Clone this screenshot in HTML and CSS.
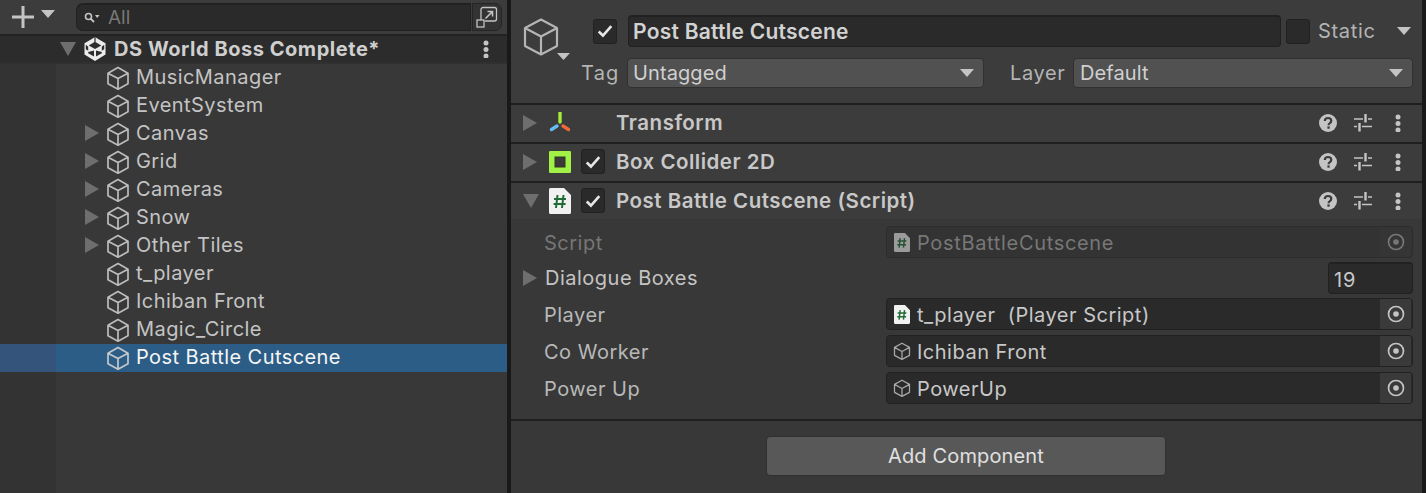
FILE: index.html
```html
<!DOCTYPE html>
<html lang="en">
<head>
<meta charset="utf-8">
<title>Unity Editor</title>
<link rel="stylesheet" href="styles.css">
</head>
<body>
<svg class="defs" width="0" height="0" aria-hidden="true">
  <symbol id="cube" viewBox="0 0 24 24">
    <path d="M12 1.6 22 7.2V17.8L12 23.2 2 17.8V7.2ZM2 7.2 12 12.6 22 7.2M12 12.6V23.2" fill="none" stroke="currentColor" stroke-width="1.7" stroke-linejoin="round"/>
  </symbol>
  <symbol id="script" viewBox="0 0 22 26">
    <path d="M1.5 0H15L22 7V24.5A1.5 1.5 0 0 1 20.500 26H1.500A1.500 1.500 0 0 1 0 24.500V1.500A1.500 1.500 0 0 1 1.500 0Z" fill="#f1f1f1"/>
    <path d="M8.500 7 7 20M14.500 7 13 20M5 11h12M4.600 16h12" fill="none" stroke="#1f6b35" stroke-width="2"/>
  </symbol>
  <symbol id="target" viewBox="0 0 18 18">
    <circle cx="9" cy="9" r="7.500" fill="none" stroke="currentColor" stroke-width="1.700"/>
    <circle cx="9" cy="9" r="2.800" fill="currentColor"/>
  </symbol>
  <symbol id="help" viewBox="0 0 18 18">
    <circle cx="9" cy="9" r="9" fill="#c4c4c4"/>
    <path d="M5.800 7C5.900 5 7.300 4 9 4c1.900 0 3.300 1.100 3.300 2.800 0 1.400-.8 2-1.700 2.600-.8.500-1 .9-1 1.800" fill="none" stroke="#3c3c3c" stroke-width="2.200"/>
    <rect x="8.400" y="12.400" width="2.300" height="2.300" fill="#3c3c3c"/>
  </symbol>
  <symbol id="sliders" viewBox="0 0 18 18">
    <path d="M0 5H9M14 5H18M0 12.500H3M8 12.500H18" stroke="#c4c4c4" stroke-width="1.500" fill="none"/>
    <path d="M11.500 0V8.500M5.500 9V17.500" stroke="#c4c4c4" stroke-width="2.400" fill="none"/>
  </symbol>
  <symbol id="dots" viewBox="0 0 6 18">
    <circle cx="3" cy="3" r="2.500" fill="#c4c4c4"/>
    <circle cx="3" cy="9.500" r="2.500" fill="#c4c4c4"/>
    <circle cx="3" cy="16" r="2.500" fill="#c4c4c4"/>
  </symbol>
  <symbol id="check" viewBox="0 0 14 12">
    <path d="M1.500 6.500 5.200 10 12.500 1.800" fill="none" stroke="#e6e6e6" stroke-width="2.300"/>
  </symbol>
</svg>

<div class="app">
  <section class="hierarchy">
    <div class="toolbar">
      <svg class="plus" viewBox="0 0 22 22"><path d="M11 0V22M0 11H22" stroke="#c4c4c4" stroke-width="3"/></svg>
      <span class="caret caret-toolbar"></span>
      <div class="search">
        <svg class="search-icon" viewBox="0 0 16 12"><circle cx="4.500" cy="4.500" r="3" fill="none" stroke="#c4c4c4" stroke-width="1.600"/><path d="M6.500 6.500 10 10" stroke="#c4c4c4" stroke-width="1.800"/><path d="M11 3h4.500L13.200 6Z" fill="#c4c4c4"/></svg>
        <span class="search-text">All</span>
      </div>
      <div class="scene-btn">
        <svg class="scene-icon" viewBox="0 0 22 22" fill="none" stroke="#c4c4c4" stroke-width="1.300"><path d="M5 14V3.500A2 2 0 0 1 7 1.500H18.500A2 2 0 0 1 20.500 3.500V13A2 2 0 0 1 18.500 15H9"/><rect x="1" y="14" width="7" height="7"/><path d="M9.500 12.500 16 6M11.500 5.500H16.500V10.500" stroke-width="1.600"/></svg>
      </div>
    </div>
    <div class="scene-row">
      <span class="tri-down tri-scene"></span>
      <svg class="unity" viewBox="0 0 22 24">
        <path d="M11 0 15 2.600 21.500 6.200V17.500L11 24 .5 17.500V6.200L7 2.600Z" fill="#ececec"/>
        <path d="M11 4.800 17.300 8.400 11 12 4.700 8.400Z" fill="#2d2d2d"/>
        <path d="M4.200 9.800V13.700L1.800 12.300V7.800ZM17.800 9.800V13.700L20.200 12.300V7.800ZM10 13.500V19.500L4.200 16.200V15ZM12 13.500V19.500L17.800 16.200V15Z" fill="#2d2d2d"/>
        <path d="M11 0V5" stroke="#2d2d2d" stroke-width="1.200"/>
      </svg>
      <span class="scene-name">DS World Boss Complete*</span>
      <svg class="dots scene-dots"><use href="#dots"/></svg>
    </div>
    <div class="tree">
      <div class="gutter"></div>
      <ul class="rows">
        <li class="row"><span class="no-tri"></span><svg class="cube"><use href="#cube"/></svg><span class="row-text">MusicManager</span></li>
        <li class="row"><span class="no-tri"></span><svg class="cube"><use href="#cube"/></svg><span class="row-text">EventSystem</span></li>
        <li class="row"><span class="tri-right"></span><svg class="cube"><use href="#cube"/></svg><span class="row-text">Canvas</span></li>
        <li class="row"><span class="tri-right"></span><svg class="cube"><use href="#cube"/></svg><span class="row-text">Grid</span></li>
        <li class="row"><span class="tri-right"></span><svg class="cube"><use href="#cube"/></svg><span class="row-text">Cameras</span></li>
        <li class="row"><span class="tri-right"></span><svg class="cube"><use href="#cube"/></svg><span class="row-text">Snow</span></li>
        <li class="row"><span class="tri-right"></span><svg class="cube"><use href="#cube"/></svg><span class="row-text">Other Tiles</span></li>
        <li class="row"><span class="no-tri"></span><svg class="cube"><use href="#cube"/></svg><span class="row-text">t_player</span></li>
        <li class="row"><span class="no-tri"></span><svg class="cube"><use href="#cube"/></svg><span class="row-text">Ichiban Front</span></li>
        <li class="row"><span class="no-tri"></span><svg class="cube"><use href="#cube"/></svg><span class="row-text">Magic_Circle</span></li>
        <li class="row selected"><span class="no-tri"></span><svg class="cube"><use href="#cube"/></svg><span class="row-text">Post Battle Cutscene</span></li>
      </ul>
    </div>
  </section>

  <section class="inspector">
    <header class="go-header">
      <svg class="go-icon" viewBox="0 0 48 45">
        <path d="M18 1.500 34 10V28L18 36.500 2 28V10ZM2 10 18 18.500 34 10M18 18.500V36.500" fill="none" stroke="#b4b4b4" stroke-width="2.200" stroke-linejoin="round"/>
        <path d="M34 35H47L40.500 42Z" fill="#c4c4c4"/>
      </svg>
      <div class="go-fields">
        <div class="go-row go-row-top">
          <span class="checkbox checked"><svg class="tick"><use href="#check"/></svg></span>
          <div class="name-field">Post Battle Cutscene</div>
          <span class="checkbox static-box"></span>
          <span class="static-label">Static</span>
          <span class="caret caret-static"></span>
        </div>
        <div class="go-row go-row-bottom">
          <span class="go-label tag-label">Tag</span>
          <div class="dropdown tag-drop">Untagged<span class="caret"></span></div>
          <span class="go-label layer-label">Layer</span>
          <div class="dropdown layer-drop">Default<span class="caret"></span></div>
        </div>
      </div>
    </header>

    <div class="comp-head">
      <span class="tri-right comp-tri"></span>
      <svg class="comp-icon" viewBox="0 0 22 22">
        <path d="M11 1V10" stroke="#a6ec3c" stroke-width="3.400" stroke-linecap="round"/>
        <path d="M8 14 2.500 17.500" stroke="#63bdf3" stroke-width="3.400" stroke-linecap="round"/>
        <path d="M14 14 19.500 17.500" stroke="#f0683a" stroke-width="3.400" stroke-linecap="round"/>
      </svg>
      <span class="comp-spacer"></span>
      <span class="comp-title">Transform</span>
      <div class="comp-tools"><svg class="help"><use href="#help"/></svg><svg class="sliders"><use href="#sliders"/></svg><svg class="dots"><use href="#dots"/></svg></div>
    </div>
    <div class="comp-head">
      <span class="tri-right comp-tri"></span>
      <svg class="comp-icon" viewBox="0 0 22 22"><rect width="22" height="22" rx="1" fill="#a0f045"/><rect x="6" y="6" width="10" height="10" fill="#3a3a3a" stroke="#2c3b1c"/></svg>
      <span class="checkbox checked comp-check"><svg class="tick"><use href="#check"/></svg></span>
      <span class="comp-title">Box Collider 2D</span>
      <div class="comp-tools"><svg class="help"><use href="#help"/></svg><svg class="sliders"><use href="#sliders"/></svg><svg class="dots"><use href="#dots"/></svg></div>
    </div>
    <div class="comp-head comp-open">
      <span class="tri-down comp-tri"></span>
      <svg class="comp-icon doc"><use href="#script"/></svg>
      <span class="checkbox checked comp-check"><svg class="tick"><use href="#check"/></svg></span>
      <span class="comp-title">Post Battle Cutscene (Script)</span>
      <div class="comp-tools"><svg class="help"><use href="#help"/></svg><svg class="sliders"><use href="#sliders"/></svg><svg class="dots"><use href="#dots"/></svg></div>
    </div>

    <div class="props">
      <div class="prop disabled">
        <span class="prop-label">Script</span>
        <div class="obj-field"><svg class="mini-doc"><use href="#script"/></svg><span class="obj-text">PostBattleCutscene</span><span class="picker"><svg class="target"><use href="#target"/></svg></span></div>
      </div>
      <div class="prop prop-array">
        <span class="tri-right array-tri"></span>
        <span class="prop-label array-label">Dialogue Boxes</span>
        <div class="num-field">19</div>
      </div>
      <div class="prop">
        <span class="prop-label">Player</span>
        <div class="obj-field"><svg class="mini-doc"><use href="#script"/></svg><span class="obj-text">t_player&nbsp; (Player Script)</span><span class="picker"><svg class="target"><use href="#target"/></svg></span></div>
      </div>
      <div class="prop">
        <span class="prop-label">Co Worker</span>
        <div class="obj-field"><svg class="mini-cube"><use href="#cube"/></svg><span class="obj-text">Ichiban Front</span><span class="picker"><svg class="target"><use href="#target"/></svg></span></div>
      </div>
      <div class="prop">
        <span class="prop-label">Power Up</span>
        <div class="obj-field"><svg class="mini-cube"><use href="#cube"/></svg><span class="obj-text">PowerUp</span><span class="picker"><svg class="target"><use href="#target"/></svg></span></div>
      </div>
    </div>

    <div class="footer">
      <div class="add-btn">Add Component</div>
    </div>
  </section>
</div>
</body>
</html>
```

FILE: styles.css
```css
* { box-sizing: border-box; }
html, body { margin: 0; padding: 0; height: 100%; overflow: hidden; }
body { background: #191919; color: #c8c8c8; font-family: Inter, "Liberation Sans", sans-serif; font-size: 20px; }
.defs { display: block; height: 0; }
.app { display: flex; height: 493px; width: 1426px; }

/* Shared glyphs */
.caret { display: inline-block; width: 0; height: 0; border-left: 7px solid transparent; border-right: 7px solid transparent; border-top: 8px solid #c4c4c4; }
.tri-right { display: block; width: 0; height: 0; border-top: 8px solid transparent; border-bottom: 8px solid transparent; border-left: 14px solid #6e6e6e; }
.tri-down { display: block; width: 0; height: 0; border-left: 8px solid transparent; border-right: 8px solid transparent; border-top: 14px solid #6e6e6e; }
.checkbox { flex: none; display: flex; align-items: center; justify-content: center; width: 24px; height: 25px; background: #2a2a2a; border: 1px solid #212121; border-radius: 3px; }
.tick { width: 16px; height: 14px; }
.dots { width: 6px; height: 18px; }

/* Hierarchy */
.hierarchy { flex: none; width: 507px; background: #383838; display: flex; flex-direction: column; }
.toolbar { flex: none; height: 36px; display: flex; align-items: center; background: #3c3c3c; border-bottom: 2px solid #232323; padding: 0 7px 0 12px; }
.plus { width: 22px; height: 22px; flex: none; }
.caret-toolbar { margin-left: 7px; margin-top: -6px; }
.search { flex: none; width: 395px; height: 28px; margin-left: 21px; background: #2a2a2a; border: 1px solid #212121; border-top-width: 2px; border-radius: 7px 0 0 7px; display: flex; align-items: center; padding-left: 7px; }
.search-icon { width: 16px; height: 12px; margin-right: 8px; }
.search-text { color: #777; font-size: 19px; }
.scene-btn { flex: none; width: 30px; height: 28px; margin-left: 1px; background: #333; border: 1px solid #252525; border-radius: 0 7px 7px 0; display: flex; align-items: center; justify-content: center; }
.scene-icon { width: 22px; height: 22px; }
.scene-row { flex: none; height: 28px; display: flex; align-items: center; background: #2c2c2c; border-bottom: 2px solid #303030; padding-left: 60px; padding-right: 18px; }
.unity { width: 22px; height: 24px; margin-left: 8px; flex: none; }
.scene-name { margin-left: 8px; font-weight: 700; color: #cfcfcf; flex: 1; letter-spacing: .54px; }
.tree { flex: 1; display: flex; min-height: 0; position: relative; }
.gutter { position: absolute; left: 0; top: 0; bottom: 0; width: 56px; background: #333; }
.rows { list-style: none; margin: 0; padding: 0; width: 100%; position: relative; }
.row { height: 28px; display: flex; align-items: center; padding-left: 85px; color: #c4c4c4; line-height: 26px; }
.row .tri-right { flex: none; margin-top: -2px; }
.row-text { padding-bottom: 2px; letter-spacing: .43px; }
.no-tri { width: 14px; flex: none; }
.cube { width: 24px; height: 24px; flex: none; margin: 0 7px 0 7px; color: #bcbcbc; }
.row .row-text { margin-left: -1px; }
.selected { background: linear-gradient(90deg, #35547c 56px, #2c5d87 56px); color: #f5f5f5; }
.selected .cube { color: #c4c8cc; }

/* Inspector */
.inspector { flex: none; width: 911px; margin-left: 4px; background: #383838; display: flex; flex-direction: column; }
.go-header { flex: none; height: 105px; background: #3c3c3c; border-bottom: 2px solid #1f1f1f; display: flex; padding: 15px 9px 0 12px; }
.go-icon { flex: none; width: 48px; height: 45px; margin-top: 3px; margin-right: 11px; }
.go-fields { flex: 1; display: flex; flex-direction: column; min-width: 0; }
.go-row { display: flex; align-items: center; }
.go-row-top { height: 32px; padding-left: 11px; }
.name-field { flex: none; width: 653px; height: 32px; margin-left: 11px; padding-left: 4px; background: #2a2a2a; border: 1px solid #212121; border-top-width: 2px; border-radius: 4px; font-size: 21px; font-weight: 600; color: #d2d2d2; display: flex; align-items: center; letter-spacing: .25px; }
.static-box { margin-left: 5px; }
.static-label { margin-left: 8px; color: #b4b4b4; letter-spacing: .7px; }
.caret-static { margin-left: 21px; }
.go-row-bottom { height: 30px; margin-top: 11px; }
.go-label { color: #b4b4b4; width: 46px; flex: none; letter-spacing: .6px; }
.tag-label { margin-left: -1px; letter-spacing: 1.2px; }
.dropdown { flex: none; height: 30px; display: flex; align-items: center; justify-content: space-between; background: #515151; border: 1px solid #303030; border-radius: 4px; padding: 0 9px 0 6px; color: #d0d0d0; letter-spacing: .1px; }
.tag-drop { width: 357px; padding-left: 5px; }
.layer-label { margin-left: 26px; width: 63px; }
.layer-drop { width: 340px; }

.comp-head { flex: none; height: 39px; display: flex; align-items: center; background: #3c3c3c; border-bottom: 2px solid #1f1f1f; padding: 0 21px 2px 12px; }
.comp-open { height: 36px; border-bottom: 0; padding-bottom: 1px; }
.comp-tri { flex: none; }
.comp-icon { flex: none; width: 22px; height: 22px; margin-left: 12px; }
.tri-down.comp-tri + .comp-icon { margin-left: 10px; }
.comp-icon.doc { height: 26px; }
.comp-spacer { width: 24px; flex: none; margin-left: 10px; }
.comp-check { margin-left: 10px; }
.comp-title { margin-left: 11px; font-size: 20.5px; font-weight: 600; color: #c8c8c8; flex: 1; letter-spacing: .5px; }
.comp-tools { display: flex; align-items: center; flex: none; }
.help { width: 18px; height: 18px; }
.sliders { width: 18px; height: 18px; margin-left: 17px; }
.comp-tools .dots { margin-left: 23px; }

.props { flex: none; height: 202px; padding: 7px 9px 0 33px; border-bottom: 2px solid #1f1f1f; display: flex; flex-direction: column; gap: 5px; }
.prop { display: flex; align-items: center; height: 32px; justify-content: space-between; flex: none; }
.prop-array { height: 30px; }
.prop-label { color: #b8b8b8; letter-spacing: .5px; padding-top: 2px; }
.array-tri { margin-left: -21px; flex: none; }
.array-label { margin-left: 8px; flex: 1; color: #c4c4c4; padding-top: 0; }
.obj-field { flex: none; width: 527px; height: 32px; display: flex; align-items: center; background: #2a2a2a; border: 1px solid #212121; border-radius: 4px; padding-left: 7px; color: #c8c8c8; overflow: hidden; }
.mini-doc { width: 16px; height: 19px; flex: none; }
.mini-cube { width: 18px; height: 18px; flex: none; margin-left: -1px; margin-right: -1px; color: #a8a8a8; }
.obj-text { margin-left: 7px; flex: 1; letter-spacing: .5px; white-space: nowrap; padding-top: 2px; }
.picker { flex: none; width: 31px; height: 30px; background: #3a3a3a; display: flex; align-items: center; justify-content: center; color: #c4c4c4; margin-right: 1px; }
.target { width: 18px; height: 18px; }
.num-field { flex: none; width: 85px; height: 32px; background: #2a2a2a; border: 1px solid #212121; border-top-width: 2px; border-radius: 4px; padding: 2px 0 0 5px; display: flex; align-items: center; color: #c8c8c8; letter-spacing: .8px; }
.disabled .prop-label { color: #767676; }
.disabled .obj-field { background: #333; color: #777; border-color: #2c2c2c; }
.disabled .obj-text { letter-spacing: .67px; }
.disabled .mini-doc { opacity: .55; }
.disabled .picker { background: #353535; color: #777; }

.footer { flex: 1; display: flex; justify-content: center; padding: 15px 0 0 0; margin-left: -1px; }
.add-btn { width: 400px; height: 40px; background: #585858; border: 1px solid #303030; border-radius: 4px; display: flex; align-items: center; justify-content: center; color: #e0e0e0; letter-spacing: .15px; }
```
